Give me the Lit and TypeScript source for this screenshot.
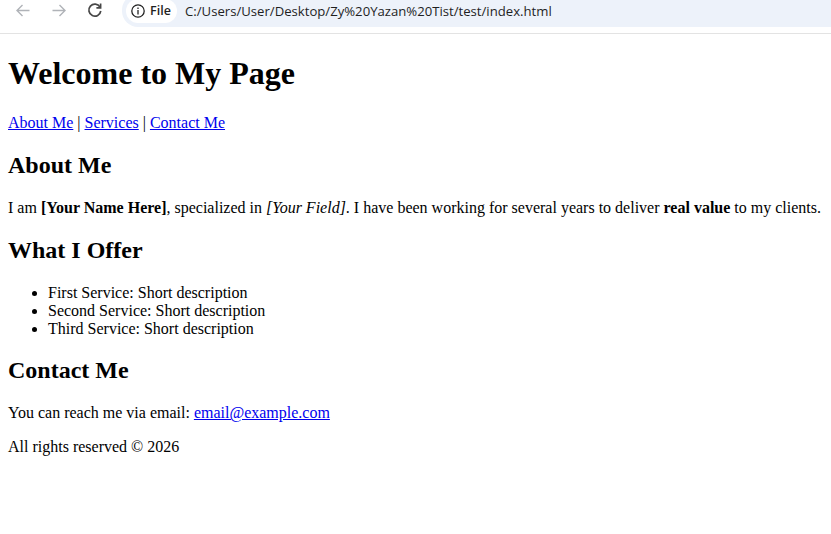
import { LitElement, html, css } from "lit";
import { customElement } from "lit/decorators.js";

@customElement("app-root")
export class AppRoot extends LitElement {
  static styles = css`
    :host { display: block; background: #fff; color: #000; font-family: "Liberation Serif", "Times New Roman", serif; font-size: 16px; }
    .toolbar { height: 33px; display: flex; align-items: flex-start; border-bottom: 1px solid #e3e3e3; overflow: hidden; }
    .navs { display: flex; width: 122px; padding-left: 14px; padding-top: 1px; gap: 18px; box-sizing: border-box; }
    .navs svg { width: 18px; height: 18px; display: block; }
    .omni { flex: 1; height: 33px; margin-top: -6px; background: #edf2fa; border-radius: 16px 0 0 16px; display: flex; align-items: center; padding-left: 4px; font-family: "Open Sans", "Noto Sans", sans-serif; font-size: 13.15px; color: #1f1f1f; }
    .chip { width: 51px; height: 24px; background: #fff; border-radius: 12px; display: flex; align-items: center; gap: 4px; padding-left: 4px; font-weight: 600; font-size: 12.5px; box-sizing: border-box; }
    .chip svg { width: 16px; height: 16px; display: block; flex: none; }
    .url { margin-left: 8px; white-space: nowrap; }
    main { padding: 0 8px; display: flow-root; }
    h1 { font-size: 32px; margin: 21.44px 0; }
    h2 { font-size: 24px; margin: 19.92px 0; }
    p { margin: 16px 0; }
    ul { margin: 16px 0; padding-left: 40px; }
    .nav { margin: 21.44px 0 16px; }
    a { color: #0000ee; text-decoration: underline; }
  `;

  render() {
    return html`
      <div class="toolbar">
        <div class="navs">
          <svg viewBox="0 0 18 18" fill="none" stroke="#b0b3b8" stroke-width="1.4"><path d="M15.5 9.5H3M8.5 4 3 9.5 8.5 15"/></svg>
          <svg viewBox="0 0 18 18" fill="none" stroke="#b0b3b8" stroke-width="1.4"><path d="M2.5 9.5H15M9.5 4 15 9.5 9.5 15"/></svg>
          <svg viewBox="0 0 18 18" fill="none" stroke="#474747" stroke-width="1.7"><path d="M14 6a6 6 0 1 0 .8 4"/><path d="M14.6 2.6v4.2h-4.2" /></svg>
        </div>
        <div class="omni">
          <div class="chip">
            <svg viewBox="0 0 16 16" fill="none" stroke="#1f1f1f" stroke-width="1.25"><circle cx="8" cy="8" r="6.2"/><path d="M8 7v4.4M8 4.4v1.5"/></svg>
            <span>File</span>
          </div>
          <span class="url">C:/Users/User/Desktop/Zy%20Yazan%20Tist/test/index.html</span>
        </div>
      </div>
      <main>
        <h1>Welcome to My Page</h1>
        <p class="nav"><a href="#about">About Me</a> | <a href="#services">Services</a> | <a href="#contact">Contact Me</a></p>
        <h2>About Me</h2>
        <p>I am <strong>[Your Name Here]</strong>, specialized in <em>[Your Field]</em>. I have been working for several years to deliver <strong>real value</strong> to my clients.</p>
        <h2>What I Offer</h2>
        <ul>
          <li>First Service: Short description</li>
          <li>Second Service: Short description</li>
          <li>Third Service: Short description</li>
        </ul>
        <h2>Contact Me</h2>
        <p>You can reach me via email: <a href="mailto:email@example.com">email@example.com</a></p>
        <p>All rights reserved © 2026</p>
      </main>
    `;
  }
}
